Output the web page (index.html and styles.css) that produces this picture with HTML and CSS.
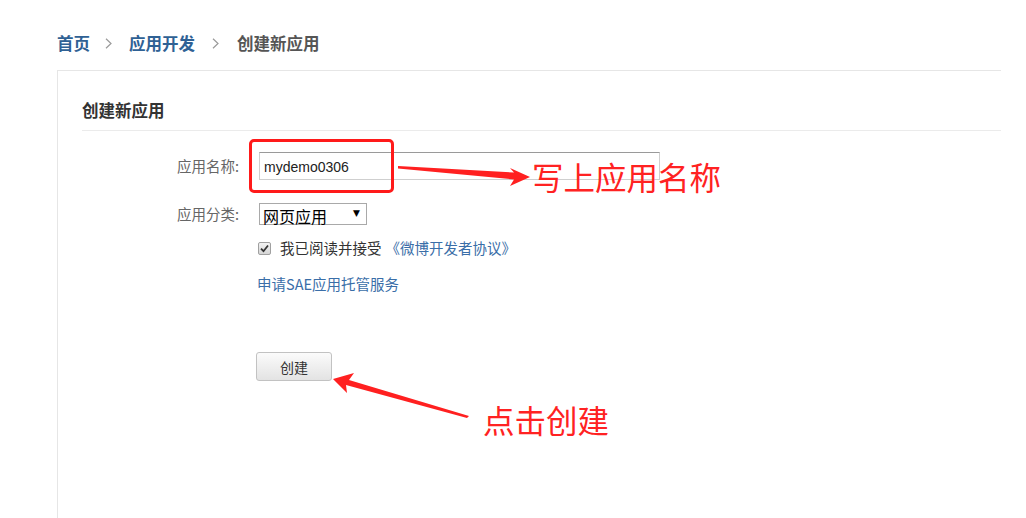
FILE: index.html
```html
<!DOCTYPE html>
<html lang="zh-CN">
<head>
<meta charset="utf-8">
<title>创建新应用</title>
<link rel="stylesheet" href="styles.css">
</head>
<body>
<div class="page">
  <nav class="crumbs">
    <a class="crumb-link" href="#">首页</a>
    <svg class="chev" width="7" height="11" viewBox="0 0 7 11"><path d="M1 0.8 L6 5.5 L1 10.2" fill="none" stroke="#9a9a9a" stroke-width="1.2"/></svg>
    <a class="crumb-link" href="#">应用开发</a>
    <svg class="chev chev-2" width="7" height="11" viewBox="0 0 7 11"><path d="M1 0.8 L6 5.5 L1 10.2" fill="none" stroke="#9a9a9a" stroke-width="1.2"/></svg>
    <span class="crumb-current">创建新应用</span>
  </nav>

  <section class="panel">
    <h2 class="panel-title">创建新应用</h2>
    <div class="form">
      <div class="row row-name">
        <label class="label">应用名称:</label>
        <div class="input">mydemo0306</div>
      </div>
      <div class="row row-type">
        <label class="label">应用分类:</label>
        <div class="select"><span class="select-text">网页应用</span><span class="select-arrow">▼</span></div>
      </div>
      <div class="row row-agree">
        <span class="checkbox">
          <svg width="9" height="9" viewBox="0 0 9 9"><path d="M1 4.6 L3.5 7.2 L8 1.5" fill="none" stroke="#333" stroke-width="1.8"/></svg>
        </span>
        <span class="agree-text">我已阅读并接受</span>
        <a class="link" href="#">《微博开发者协议》</a>
      </div>
      <div class="row row-sae">
        <a class="link" href="#">申请SAE应用托管服务</a>
      </div>
      <div class="row row-btn">
        <button class="btn">创建</button>
      </div>
    </div>
  </section>

  <div class="annot">
    <div class="mark-box"></div>
    <svg class="arrows" width="1026" height="518" viewBox="0 0 1026 518">
      <polygon points="398,166 514,172.5 510,168 530,177 510,186 514,179.5 398,168.5" fill="#ff2020"/>
      <polygon points="333,379 354,373 349,380 469,416 467,418 346,385 347,393" fill="#ff2020"/>
    </svg>
    <div class="note note-1">写上应用名称</div>
    <div class="note note-2">点击创建</div>
  </div>
</div>
</body>
</html>
```

FILE: styles.css
```css
* { box-sizing: border-box; }
html, body { margin: 0; padding: 0; background: #fff; }
body {
  font-family: "Noto Sans CJK SC", "Noto Sans", sans-serif;
  color: #333;
  width: 1026px;
  height: 518px;
  overflow: hidden;
}
.page { position: relative; width: 1026px; height: 518px; }

.crumbs {
  height: 70px;
  padding: 31px 0 0 57px;
  display: flex;
  align-items: flex-start;
}
.crumb-link, .crumb-current {
  font-size: 16.5px;
  font-weight: bold;
  line-height: 24px;
  text-decoration: none;
}
.crumb-link { color: #2f6194; }
.crumb-current { color: #555; }
.chev { margin: 7px 17px 0 15px; }
.chev-2 { margin-left: 17px; margin-right: 18px; }

.panel {
  margin-left: 57px;
  width: 944px;
  height: 448px;
  border-top: 1px solid #e6e6e6;
  border-left: 1px solid #e6e6e6;
  padding-left: 24px;
}
.panel-title {
  margin: 0;
  padding: 29px 0 10px 0;
  font-size: 16.5px;
  font-weight: bold;
  line-height: 20px;
  color: #333;
  border-bottom: 1px solid #ebebeb;
}

.form { padding-left: 95px; display: flex; flex-direction: column; }
.row { display: flex; align-items: center; }
.label {
  width: 82px;
  font-size: 14.5px;
  color: #666;
  line-height: 20px;
}
.row-name { margin-top: 21px; }
.input {
  width: 401px;
  height: 28px;
  border: 1px solid #cfcfcf;
  border-top-color: #9a9a9a;
  font-family: "Liberation Sans", Arial, sans-serif;
  font-size: 14px;
  color: #222;
  line-height: 28px;
  padding-left: 4px;
}
.row-type { margin-top: 23px; }
.select {
  width: 108px;
  height: 22px;
  border: 1px solid #a9a9a9;
  display: flex;
  align-items: center;
  justify-content: space-between;
  padding: 0 6px 0 3px;
}
.select-text { font-size: 16px; color: #000; line-height: 20px; margin-top: 3px; }
.select-arrow { font-size: 9px; color: #000; font-family: "DejaVu Sans", sans-serif; margin-top: -2px; }

.row-agree { margin-top: 13px; padding-left: 80px; height: 20px; }
.checkbox {
  width: 13px;
  height: 13px;
  border: 1px solid #a0a0a0;
  border-radius: 2px;
  background: linear-gradient(#f2f2f2, #d6d6d6);
  display: flex;
  align-items: center;
  justify-content: center;
  margin-left: 1px;
  margin-right: 9px;
}
.agree-text { font-size: 14.5px; color: #333; line-height: 20px; margin-right: 4px; }
.link { font-size: 14.5px; color: #3a6ea8; text-decoration: none; line-height: 20px; }
.row-sae { margin-top: 16px; padding-left: 80px; }
.row-btn { margin-top: 58px; padding-left: 79px; }
.btn {
  width: 76px;
  height: 29px;
  border: 1px solid #c2c2c2;
  border-radius: 3px;
  background: linear-gradient(#fbfbfb, #e3e3e3);
  font-family: "Noto Sans CJK SC", sans-serif;
  font-size: 14px;
  color: #333;
  padding: 0;
}

.annot { position: absolute; left: 0; top: 0; width: 1026px; height: 518px; pointer-events: none; }
.mark-box {
  position: absolute;
  left: 249px;
  top: 139px;
  width: 145px;
  height: 54px;
  border: 3px solid #ff1a1a;
  border-radius: 5px;
}
.arrows { position: absolute; left: 0; top: 0; }
.note {
  position: absolute;
  font-family: "Noto Sans CJK SC", sans-serif;
  font-size: 31.5px;
  line-height: 36px;
  color: #ff2222;
  white-space: nowrap;
}
.note-1 { left: 532px; top: 158px; }
.note-2 { left: 483px; top: 401px; }
```
